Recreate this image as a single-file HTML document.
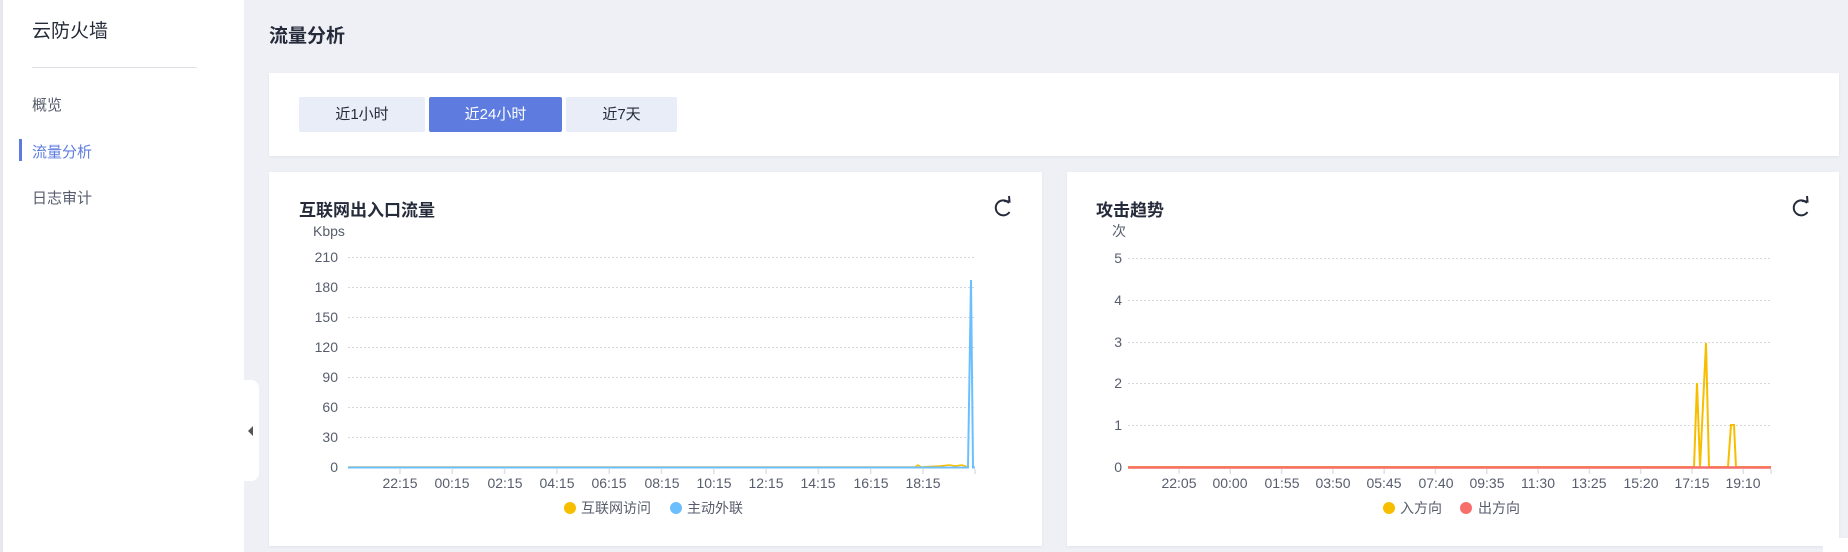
<!DOCTYPE html>
<html><head><meta charset="utf-8"><style>
*{margin:0;padding:0;box-sizing:border-box}
body{width:1848px;height:552px;overflow:hidden;background:#eef0f5;font-family:"Liberation Sans","Noto Sans CJK SC",sans-serif;position:relative;color:#252b3a}
.abs{position:absolute}
.side{left:0;top:0;width:244px;height:552px;background:#fff;border-left:3px solid #e6e8ee}
.btn{position:absolute;top:97px;height:35px;line-height:35px;text-align:center;font-size:15px;background:#e8edf8;color:#252b3a;border-radius:2px}
.card{background:#fff;box-shadow:0 1px 3px rgba(0,0,0,.06)}
svg text{font-family:"Liberation Sans","Noto Sans CJK SC",sans-serif}
</style></head><body>
<div class="abs side"></div>
<div class="abs" style="left:32px;top:16px;font-size:19px;color:#252b3a">云防火墙</div>
<div class="abs" style="left:32px;top:67px;width:165px;height:1px;background:#dfe1e6"></div>
<div class="abs" style="left:32px;top:94px;font-size:15px;color:#575d6c">概览</div>
<div class="abs" style="left:19px;top:139px;width:3px;height:22px;background:#5e7ce0"></div>
<div class="abs" style="left:32px;top:141px;font-size:15px;color:#5e7ce0">流量分析</div>
<div class="abs" style="left:32px;top:187px;font-size:15px;color:#575d6c">日志审计</div>
<div class="abs" style="left:244px;top:380px;width:15px;height:101px;background:#fff;border-radius:0 8px 8px 0"></div>
<div class="abs" style="left:248px;top:426px;width:0;height:0;border-top:5px solid transparent;border-bottom:5px solid transparent;border-right:5px solid #555"></div>
<div class="abs" style="left:269px;top:21px;font-size:19px;font-weight:bold">流量分析</div>
<div class="abs card" style="left:269px;top:73px;width:1570px;height:83px"></div>
<div class="btn" style="left:299px;width:126px">近1小时</div>
<div class="btn" style="left:429px;width:133px;background:#5e7ce0;color:#fff">近24小时</div>
<div class="btn" style="left:566px;width:111px">近7天</div>
<div class="abs card" style="left:269px;top:172px;width:773px;height:374px"></div>
<div class="abs card" style="left:1067px;top:172px;width:772px;height:374px"></div>
<div class="abs" style="left:1823px;top:538px;width:25px;height:14px;background:#fff"></div>
<svg class="abs" style="left:0;top:0" width="1848" height="552">
<g fill="#252b3a" font-weight="bold" font-size="17">
<text x="299" y="216">互联网出入口流量</text>
<text x="1096" y="216">攻击趋势</text>
</g>
<g fill="none" stroke="#252b3a" stroke-width="2">
<path d="M1009 203 A7.5 7.5 0 1 0 1009.5 212"/><path d="M1004 201 L1009.5 201.5 L1009 196"/>
<path d="M1807 203 A7.5 7.5 0 1 0 1807.5 212"/><path d="M1802 201 L1807.5 201.5 L1807 196"/>
</g>
<g fill="#575d6c" font-size="14">
<text x="313" y="236">Kbps</text>
<text x="1112" y="236">次</text>
</g>
<g stroke="#d5d8de" stroke-dasharray="2,2" stroke-width="1">
<path d="M348 257.5H975M348 287.5H975M348 317.5H975M348 347.5H975M348 377.5H975M348 407.5H975M348 437.5H975"/>
<path d="M1128 258.5H1771M1128 300.5H1771M1128 342.5H1771M1128 383.5H1771M1128 425.5H1771"/>
</g>
<g fill="#575d6c" font-size="14" text-anchor="end">
<text x="338" y="262">210</text><text x="338" y="292">180</text><text x="338" y="322">150</text><text x="338" y="352">120</text><text x="338" y="382">90</text><text x="338" y="412">60</text><text x="338" y="442">30</text><text x="338" y="472">0</text>
<text x="1122" y="263">5</text><text x="1122" y="305">4</text><text x="1122" y="347">3</text><text x="1122" y="388">2</text><text x="1122" y="430">1</text><text x="1122" y="472">0</text>
</g>
<g stroke="#dfe1e6" stroke-width="1.5">
<path d="M400 469v5M452.3 469v5M504.6 469v5M556.9 469v5M609.2 469v5M661.5 469v5M713.8 469v5M766.1 469v5M818.4 469v5M870.7 469v5M923 469v5M975 469v5"/>
<path d="M1179 469v5M1230.3 469v5M1281.6 469v5M1332.9 469v5M1384.2 469v5M1435.5 469v5M1486.8 469v5M1538.1 469v5M1589.4 469v5M1640.7 469v5M1692 469v5M1743.3 469v5M1771 469v5"/>
</g>
<g fill="#575d6c" font-size="14" text-anchor="middle">
<text x="400" y="488">22:15</text><text x="452" y="488">00:15</text><text x="505" y="488">02:15</text><text x="557" y="488">04:15</text><text x="609" y="488">06:15</text><text x="662" y="488">08:15</text><text x="714" y="488">10:15</text><text x="766" y="488">12:15</text><text x="818" y="488">14:15</text><text x="871" y="488">16:15</text><text x="923" y="488">18:15</text>
<text x="1179" y="488">22:05</text><text x="1230" y="488">00:00</text><text x="1282" y="488">01:55</text><text x="1333" y="488">03:50</text><text x="1384" y="488">05:45</text><text x="1436" y="488">07:40</text><text x="1487" y="488">09:35</text><text x="1538" y="488">11:30</text><text x="1589" y="488">13:25</text><text x="1641" y="488">15:20</text><text x="1692" y="488">17:15</text><text x="1743" y="488">19:10</text>
</g>
<path d="M348 467H915L918 465L921 467L940 466L950 465L955 466L962 465L968 467" fill="none" stroke="#f7be00" stroke-width="1.5"/>
<path d="M348 467.5H968L971 280L973 467.5H975" fill="none" stroke="#6cbfff" stroke-width="2"/>
<path d="M1128 467H1694L1697 383L1700 467L1706 343L1709 467L1728 467L1731 425L1734 425L1736 467H1771" fill="none" stroke="#f7be00" stroke-width="2"/>
<path d="M1128 467.5H1771" stroke="#f66f6a" stroke-width="2.5"/>
<circle cx="570" cy="508" r="6" fill="#f7be00"/>
<circle cx="676" cy="508" r="6" fill="#6cbfff"/>
<circle cx="1389" cy="508" r="6" fill="#f7be00"/>
<circle cx="1466" cy="508" r="6" fill="#f66f6a"/>
<g fill="#575d6c" font-size="14">
<text x="581" y="513">互联网访问</text><text x="687" y="513">主动外联</text>
<text x="1400" y="513">入方向</text><text x="1478" y="513">出方向</text>
</g>
</svg>
</body></html>
